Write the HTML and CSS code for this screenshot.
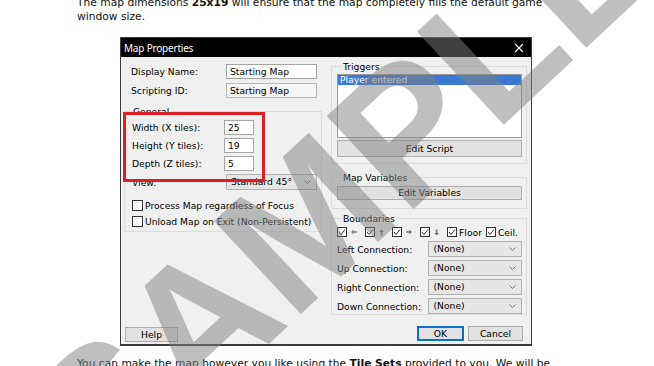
FILE: index.html
```html
<!DOCTYPE html>
<html lang="en">
<head>
  <meta charset="UTF-8">
  <title>Map Properties</title>
  <link rel="stylesheet" href="styles.css">
</head>
<body>
  <div class="page">
    <p class="intro">The map dimensions <b>25x19</b> will ensure that the map completely fills the default game window size.</p>

    <div class="dialog">
      <div class="titlebar">
        <span class="title">Map Properties</span>
        <svg class="close" width="10" height="10" viewBox="0 0 10 10"><path d="M1 1 L9 9 M9 1 L1 9" stroke="#fff" stroke-width="1.1"/></svg>
      </div>

      <div class="dlg-body">
        <div class="col-left">
          <div class="field-row">
            <label class="lbl">Display Name:</label>
            <div class="input">Starting Map</div>
          </div>
          <div class="field-row">
            <label class="lbl">Scripting ID:</label>
            <div class="input readonly">Starting Map</div>
          </div>

          <fieldset class="group general">
            <legend>General</legend>
            <div class="size-row">
              <label class="lbl">Width (X tiles):</label>
              <div class="input small">25</div>
            </div>
            <div class="size-row">
              <label class="lbl">Height (Y tiles):</label>
              <div class="input small">19</div>
            </div>
            <div class="size-row">
              <label class="lbl">Depth (Z tiles):</label>
              <div class="input small">5</div>
            </div>
            <div class="size-row view-row">
              <label class="lbl">View:</label>
              <div class="select">Standard 45°
                <svg class="chev" width="7" height="4" viewBox="0 0 7 4"><path d="M0.5 0.5 L3.5 3.5 L6.5 0.5" fill="none" stroke="#777" stroke-width="1"/></svg>
              </div>
            </div>
            <div class="check-row"><span class="box"></span>Process Map regardless of Focus</div>
            <div class="check-row"><span class="box"></span>Unload Map on Exit (Non-Persistent)</div>
          </fieldset>
        </div>

        <div class="col-right">
          <fieldset class="group triggers">
            <legend>Triggers</legend>
            <div class="listbox">
              <div class="list-item selected">Player entered</div>
            </div>
            <div class="btn wide">Edit Script</div>
          </fieldset>

          <fieldset class="group vars">
            <legend>Map Variables</legend>
            <div class="btn wide short">Edit Variables</div>
          </fieldset>

          <fieldset class="group bounds">
            <legend>Boundaries</legend>
            <div class="bound-checks">
              <span class="cb"><svg width="8" height="8" viewBox="0 0 8 8"><path d="M1 4 L3 6.5 L7 1.5" fill="none" stroke="#333" stroke-width="1"/></svg></span>
              <svg class="arrow" width="7" height="6" viewBox="0 0 7 6"><path d="M0 3 L3 0 L3 2 L7 2 L7 4 L3 4 L3 6 Z" fill="#777"/></svg>
              <span class="cb"><svg width="8" height="8" viewBox="0 0 8 8"><path d="M1 4 L3 6.5 L7 1.5" fill="none" stroke="#333" stroke-width="1"/></svg></span>
              <svg class="arrow" width="6" height="7" viewBox="0 0 6 7"><path d="M3 0 L6 3 L4 3 L4 7 L2 7 L2 3 L0 3 Z" fill="#777"/></svg>
              <span class="cb"><svg width="8" height="8" viewBox="0 0 8 8"><path d="M1 4 L3 6.5 L7 1.5" fill="none" stroke="#333" stroke-width="1"/></svg></span>
              <svg class="arrow" width="7" height="6" viewBox="0 0 7 6"><path d="M7 3 L4 0 L4 2 L0 2 L0 4 L4 4 L4 6 Z" fill="#777"/></svg>
              <span class="cb"><svg width="8" height="8" viewBox="0 0 8 8"><path d="M1 4 L3 6.5 L7 1.5" fill="none" stroke="#333" stroke-width="1"/></svg></span>
              <svg class="arrow" width="6" height="7" viewBox="0 0 6 7"><path d="M3 7 L6 4 L4 4 L4 0 L2 0 L2 4 L0 4 Z" fill="#777"/></svg>
              <span class="cb"><svg width="8" height="8" viewBox="0 0 8 8"><path d="M1 4 L3 6.5 L7 1.5" fill="none" stroke="#333" stroke-width="1"/></svg></span>
              <span class="cb-text">Floor</span>
              <span class="cb"><svg width="8" height="8" viewBox="0 0 8 8"><path d="M1 4 L3 6.5 L7 1.5" fill="none" stroke="#333" stroke-width="1"/></svg></span>
              <span class="cb-text">Ceil.</span>
            </div>
            <div class="conn-row">
              <label class="lbl">Left Connection:</label>
              <div class="select">(None)
                <svg class="chev" width="7" height="4" viewBox="0 0 7 4"><path d="M0.5 0.5 L3.5 3.5 L6.5 0.5" fill="none" stroke="#777" stroke-width="1"/></svg>
              </div>
            </div>
            <div class="conn-row">
              <label class="lbl">Up Connection:</label>
              <div class="select">(None)
                <svg class="chev" width="7" height="4" viewBox="0 0 7 4"><path d="M0.5 0.5 L3.5 3.5 L6.5 0.5" fill="none" stroke="#777" stroke-width="1"/></svg>
              </div>
            </div>
            <div class="conn-row">
              <label class="lbl">Right Connection:</label>
              <div class="select">(None)
                <svg class="chev" width="7" height="4" viewBox="0 0 7 4"><path d="M0.5 0.5 L3.5 3.5 L6.5 0.5" fill="none" stroke="#777" stroke-width="1"/></svg>
              </div>
            </div>
            <div class="conn-row">
              <label class="lbl">Down Connection:</label>
              <div class="select">(None)
                <svg class="chev" width="7" height="4" viewBox="0 0 7 4"><path d="M0.5 0.5 L3.5 3.5 L6.5 0.5" fill="none" stroke="#777" stroke-width="1"/></svg>
              </div>
            </div>
          </fieldset>
        </div>

        <div class="footer">
          <div class="btn help">Help</div>
          <div class="footer-right">
            <div class="btn ok">OK</div>
            <div class="btn cancel">Cancel</div>
          </div>
        </div>
      </div>

      <div class="highlight"></div>
    </div>

    <p class="outro">You can make the map however you like using the <b>Tile Sets</b> provided to you. We will be</p>

    <div class="watermark">SAMPLE</div>
  </div>
</body>
</html>
```

FILE: styles.css
```css
* {
  box-sizing: border-box;
  margin: 0;
}

body {
  background-color: #fff;
  width: 654px;
  height: 366px;
  overflow: hidden;
}

.page {
  position: relative;
  height: 366px;
  padding-left: 77px;
  overflow: hidden;
  font-family: "DejaVu Sans", Verdana, sans-serif;
  color: #111;
}

.intro, .outro {
  font-size: 10.7px;
  line-height: 14px;
  width: 490px;
}

.intro {
  margin-top: -4px;
}

.outro {
  margin-top: 11px;
  white-space: nowrap;
}

/* dialog */

.dialog {
  position: relative;
  margin: 13px 0 0 43px;
  width: 412px;
  height: 309px;
  border: 1px solid #3c3c3c;
  border-bottom-width: 2px;
  background-color: #f0f0f0;
  font-size: 9.2px;
  color: #000;
}

.titlebar {
  height: 19px;
  background-color: #000;
  display: flex;
  align-items: center;
  justify-content: space-between;
  padding: 0 7px 0 3px;
}

.title {
  font-family: "Noto Sans", "Open Sans", sans-serif;
  font-size: 10px;
  color: #fff;
  letter-spacing: -0.2px;
}

.dlg-body {
  height: 287px;
  display: grid;
  grid-template-columns: 198px 196px;
  grid-template-rows: 1fr auto;
  column-gap: 9px;
  padding: 0 0 2px 3px;
}

.col-left {
  padding-top: 7px;
}

.field-row {
  display: flex;
  align-items: center;
  height: 15px;
}

.field-row + .field-row {
  margin-top: 4px;
}

.field-row .lbl {
  width: 102px;
  padding-left: 7px;
}

.input {
  width: 91px;
  height: 15px;
  line-height: 13px;
  padding-left: 3px;
  background-color: #fff;
  border: 1px solid #a5a5a5;
}

.input.readonly {
  background-color: #f4f4f4;
  border-color: #b8b8b8;
}

.input.small {
  width: 30px;
}

.group {
  border: 1px solid #dcdcdc;
  padding: 0;
  min-width: 0;
}

.group legend {
  line-height: 11px;
  padding: 0 1px;
}

.general {
  margin-top: 8px;
  height: 126px;
}

.general legend {
  margin-left: 7px;
}

.size-row {
  display: flex;
  align-items: center;
  height: 15px;
  margin-top: 3px;
}

.size-row .lbl {
  width: 99px;
  padding-left: 7px;
}

.view-row {
  height: 16px;
}

.view-row .lbl {
  width: 101px;
}

.select {
  position: relative;
  width: 91px;
  height: 16px;
  line-height: 14px;
  padding-left: 4px;
  background-color: #e6e6e6;
  border: 1px solid #b0b0b0;
}

.chev {
  position: absolute;
  right: 5px;
  top: 5px;
}

.check-row {
  display: flex;
  align-items: center;
  height: 12px;
  margin-left: 7px;
}

.view-row + .check-row {
  margin-top: 9px;
}

.check-row + .check-row {
  margin-top: 4px;
}

.box {
  width: 11px;
  height: 11px;
  margin-right: 2px;
  border: 1px solid #333;
  background-color: #fff;
}

/* right column */

.col-right {
  padding-top: 4px;
}

.triggers {
  height: 103px;
  padding: 2px 4px 0 5px;
}

.triggers legend, .vars legend, .bounds legend {
  margin-left: 5px;
}

.listbox {
  height: 64px;
  background-color: #fff;
  border: 1px solid #9a9a9a;
}

.list-item {
  height: 10px;
  line-height: 10px;
  padding-left: 2px;
}

.list-item.selected {
  background-color: #3979d3;
  color: #fff;
}

.btn {
  height: 15px;
  line-height: 13px;
  text-align: center;
  background-color: #e1e1e1;
  border: 1px solid #adadad;
}

.btn.wide {
  height: 17px;
  line-height: 15px;
  margin-top: 2px;
}

.btn.wide.short {
  height: 14px;
  line-height: 12px;
}

.vars {
  margin-top: 8px;
  height: 37px;
  padding: 3px 4px 0 5px;
}

.vars .btn {
  margin-top: 0;
}

.bounds {
  margin-top: 4px;
  height: 102px;
  padding: 0 4px 0 5px;
}

.bound-checks {
  display: flex;
  align-items: center;
  height: 12px;
  margin-top: 2px;
}

.cb {
  width: 10px;
  height: 10px;
  border: 1px solid #333;
  background-color: #fff;
  display: flex;
  align-items: center;
  justify-content: center;
}

.arrow {
  margin: 0 8px 0 4px;
}

.cb-text {
  margin: 0 4px 0 2px;
}

.conn-row {
  display: flex;
  align-items: center;
  height: 16px;
  margin-top: 3px;
}

.conn-row .lbl {
  width: 92px;
}

.conn-row .select {
  width: 94px;
}

/* footer */

.footer {
  grid-column: 1 / 3;
  display: flex;
  justify-content: space-between;
  align-items: flex-end;
  padding: 0 4px 0 1px;
}

.help {
  width: 53px;
}

.footer-right {
  display: flex;
  gap: 4px;
}

.ok {
  width: 47px;
  border: 1px solid #0a6fd0;
  box-shadow: inset 0 0 0 1px #0a6fd0;
  margin-bottom: 1px;
}

.cancel {
  width: 55px;
}

/* red annotation over the screenshot */
.highlight {
  position: absolute;
  left: 2px;
  top: 74px;
  width: 142px;
  height: 70px;
  border: 3px solid #dd1f26;
}

/* watermark over the whole page */
.watermark {
  position: absolute;
  left: 50%;
  top: 50%;
  transform: translate(-48%, -47%) rotate(-43deg);
  font-family: "Liberation Sans", Arial, sans-serif;
  font-weight: bold;
  font-size: 185px;
  line-height: 1;
  white-space: nowrap;
  color: rgba(128, 128, 128, 0.5);
  pointer-events: none;
}
```
